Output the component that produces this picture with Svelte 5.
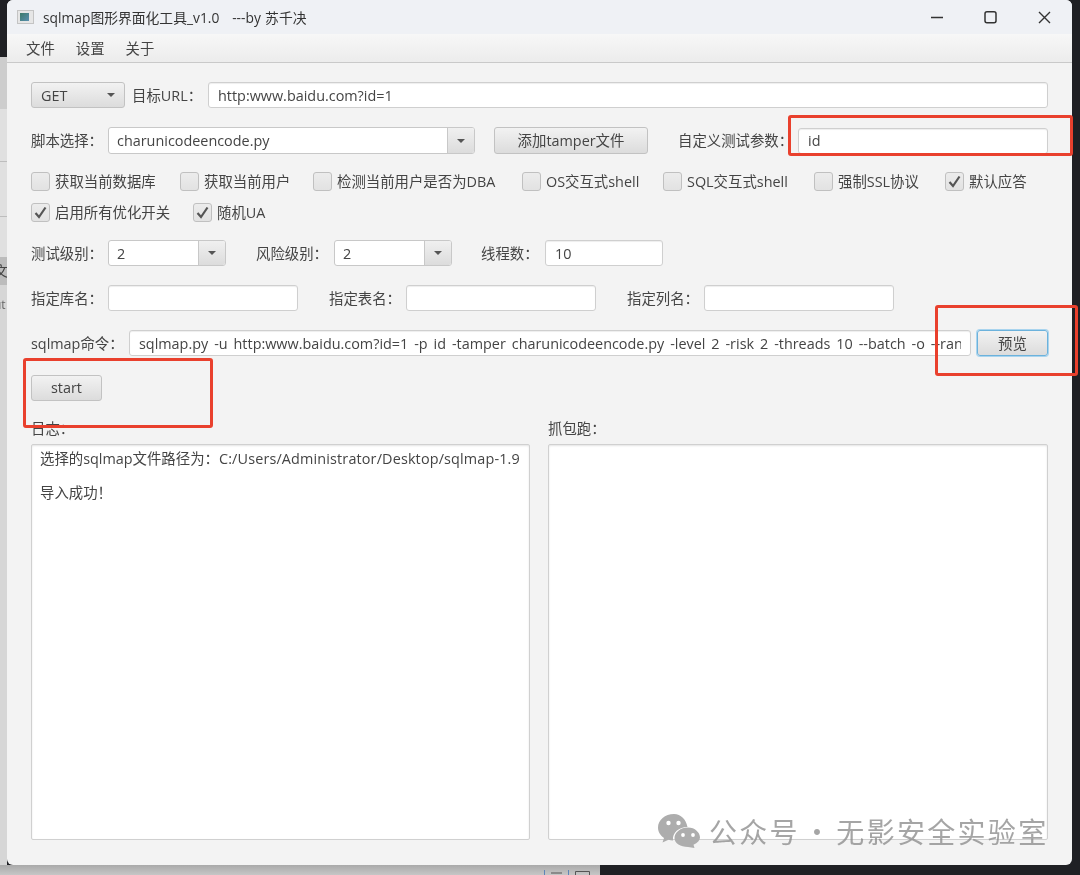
<script>
  const checksOne = [
    { text: '获取当前数据库', width: 149 },
    { text: '获取当前用户', width: 133 },
    { text: '检测当前用户是否为DBA', width: 209 },
    { text: 'OS交互式shell', width: 141 },
    { text: 'SQL交互式shell', width: 151 },
    { text: '强制SSL协议', width: 131 },
    { text: '默认应答', width: 90, on: true }
  ];
  const checksTwo = [
    { text: '启用所有优化开关', width: 162, on: true },
    { text: '随机UA', width: 90, on: true }
  ];
  const command = 'sqlmap.py -u http:www.baidu.com?id=1 -p id -tamper charunicodeencode.py -level 2 -risk 2 -threads 10 --batch -o --random-agent';
</script>

{#snippet check(item)}
  <label class="check" style={`width: ${item.width}px`}>
    <span class="check__box">
      {#if item.on}
        <svg width="15" height="15" viewBox="0 0 15 15"><path d="M2.500 8 L6 12 L12.500 2.500" fill="none" stroke="#555" stroke-width="2.200"/></svg>
      {/if}
    </span>
    <span class="check__text">{item.text}</span>
  </label>
{/snippet}

{#snippet arrow()}
  <span class="arrow"></span>
{/snippet}

<div class="desktop">
  <div class="strip">
    <div class="strip__dark"></div>
    <div class="strip__row strip__row--first"></div>
    <div class="strip__row"></div>
    <div class="strip__row strip__row--short"></div>
    <div class="strip__active">文</div>
    <div class="strip__tail">ut</div>
  </div>

  <div class="window">
    <header class="titlebar">
      <div class="titlebar__icon"><span></span></div>
      <div class="titlebar__text">sqlmap图形界面化工具_v1.0   ---by 苏千决</div>
      <svg class="winbtn" width="122" height="20" viewBox="0 0 122 20">
        <path d="M0 10.500 H12" stroke="#333" stroke-width="1.400"/>
        <rect x="54" y="4.700" width="11" height="11" rx="2" fill="none" stroke="#333" stroke-width="1.500"/>
        <path d="M108 5 L119 16 M119 5 L108 16" stroke="#333" stroke-width="1.400"/>
      </svg>
    </header>

    <nav class="menubar">
      <span>文件</span>
      <span>设置</span>
      <span>关于</span>
    </nav>

    <main class="content">
      <div class="row row--one">
        <div class="btn select">GET{@render arrow()}</div>
        <span class="label label--url">目标URL：</span>
        <input class="field field--grow" readonly value="http:www.baidu.com?id=1" />
      </div>

      <div class="row row--two">
        <span class="label label--s">脚本选择：</span>
        <div class="combo combo--wide">
          <span class="combo__value">charunicodeencode.py</span>
          <span class="combo__btn">{@render arrow()}</span>
        </div>
        <div class="btn btn--tamper">添加tamper文件</div>
        <span class="label label--param">自定义测试参数：</span>
        <input class="field field--grow" readonly value="id" />
      </div>

      <div class="checks checks--one">
        {#each checksOne as item}{@render check(item)}{/each}
      </div>
      <div class="checks checks--two">
        {#each checksTwo as item}{@render check(item)}{/each}
      </div>

      <div class="row row--three">
        <span class="label label--s">测试级别：</span>
        <div class="combo combo--num">
          <span class="combo__value">2</span>
          <span class="combo__btn">{@render arrow()}</span>
        </div>
        <span class="label label--risk">风险级别：</span>
        <div class="combo combo--num">
          <span class="combo__value">2</span>
          <span class="combo__btn">{@render arrow()}</span>
        </div>
        <span class="label label--threads">线程数：</span>
        <input class="field field--num" readonly value="10" />
      </div>

      <div class="row row--four">
        <span class="label label--s">指定库名：</span>
        <input class="field field--name" readonly />
        <span class="label label--name">指定表名：</span>
        <input class="field field--name" readonly />
        <span class="label label--name">指定列名：</span>
        <input class="field field--name" readonly />
      </div>

      <div class="row row--five">
        <span class="label label--cmd">sqlmap命令：</span>
        <input class="field field--grow field--cmd" readonly value={command} />
        <div class="btn btn--focus">预览</div>
      </div>

      <div class="btn btn--start">start</div>

      <div class="panes">
        <section class="pane">
          <div class="pane__title">日志：</div>
          <div class="area">
            <div>选择的sqlmap文件路径为：<span class="path">C:/Users/Administrator/Desktop/sqlmap-1.9</span></div>
            <div class="area__gap">导入成功！</div>
          </div>
        </section>
        <section class="pane">
          <div class="pane__title">抓包跑：</div>
          <div class="area"></div>
        </section>
      </div>
    </main>
  </div>

  <div class="bottom">
    <div class="bottom__icon">
      <svg width="56" height="10" viewBox="0 0 56 10">
        <path d="M0.500 0 V10 M24.500 0 V10" stroke="#5f84b8" stroke-width="1"/>
        <path d="M7 3 H18 M7 7 H18" stroke="#555" stroke-width="1.200"/>
        <path d="M31.500 10 V1.500 H45.500 V10" fill="none" stroke="#555" stroke-width="1"/>
      </svg>
    </div>
    <div class="bottom__dark"></div>
  </div>

  <div class="mark mark--param"></div>
  <div class="mark mark--preview"></div>
  <div class="mark mark--start"></div>

  <div class="watermark">
    <svg width="42" height="34" viewBox="0 0 42 34">
      <path d="M16 0 C7 0 0 6 0 13.500 C0 18 2.500 21.500 6 24 L4.500 28.500 L10.500 25.800 C12 26.200 13.500 26.500 15 26.500 C14.200 18.500 21 13 29.500 13 C28 5.500 23 0 16 0 Z" fill="#adadad"/>
      <path d="M30 13.500 C22.500 13.500 16.500 18.500 16.500 24 C16.500 29.500 22.500 33 30 33 L36.500 34 L35.500 30.800 C39.500 28.800 42 26.500 42 23.500 C42 18.500 37 13.500 30 13.500 Z" fill="#adadad"/>
      <circle cx="10.500" cy="9" r="2.200" fill="#fff"/>
      <circle cx="20.500" cy="9" r="2.200" fill="#fff"/>
      <circle cx="25" cy="21" r="1.900" fill="#fff"/>
      <circle cx="35" cy="21" r="1.900" fill="#fff"/>
    </svg>
    <span>公众号 · 无影安全实验室</span>
  </div>
</div>

<style>
  :global(body) {
    margin: 0;
    background: #1f2024;
  }

  .desktop {
    position: relative;
    width: 1080px;
    height: 875px;
    overflow: hidden;
    background: #1f2024;
    font-family: "Open Sans", "Noto Sans CJK SC", sans-serif;
    font-size: 14.4px;
    color: #444;
    filter: blur(0.4px);
  }

  .strip {
    position: absolute;
    left: 0;
    top: 0;
    width: 7px;
    height: 875px;
    background: #d6d6d6;
    overflow: hidden;
  }

  .strip__dark {
    height: 57px;
    background: #1f2024;
  }

  .strip__row {
    box-sizing: border-box;
    height: 55px;
    border-bottom: 1px solid #bdbdbd;
    background: #e0e0e0;
  }

  .strip__row--first {
    height: 105px;
    background: linear-gradient(#cdcdcd 50%, #e0e0e0 50%);
  }

  .strip__row--short {
    height: 40px;
    border-bottom: 0;
  }

  .strip__active {
    height: 28px;
    background: #bcbcbc;
    font-size: 14px;
    line-height: 28px;
    text-indent: -6px;
  }

  .strip__tail {
    margin-top: 11px;
    font-size: 12px;
    line-height: 18px;
    text-indent: -6px;
    color: #666;
  }

  .window {
    position: absolute;
    left: 7px;
    top: 0;
    width: 1065px;
    height: 865px;
    display: flex;
    flex-direction: column;
    border-radius: 6px;
    overflow: hidden;
    background: #f3f3f3;
  }

  .titlebar {
    height: 34px;
    flex: none;
    display: flex;
    align-items: center;
    background: #eff1f5;
  }

  .titlebar__icon {
    width: 17px;
    height: 14px;
    margin-left: 10px;
    background: #e6e6e6;
    border: 1px solid #c4c4c4;
    box-sizing: border-box;
  }

  .titlebar__icon span {
    display: block;
    width: 9px;
    height: 8px;
    margin: 2px 0 0 2px;
    background: linear-gradient(135deg, #3c7a6a, #5a8fb0);
  }

  .titlebar__text {
    margin-left: 9px;
    font-size: 13.8px;
    word-spacing: 0.7px;
    white-space: pre;
    color: #333;
    flex: 1;
  }

  .winbtn {
    flex: none;
    margin-right: 19px;
  }

  .menubar {
    height: 29px;
    flex: none;
    box-sizing: border-box;
    display: flex;
    align-items: center;
    gap: 21px;
    padding: 0 0 1px 19px;
    background: linear-gradient(#f7f7f7, #ececec);
    border-bottom: 1px solid #c9c9c9;
  }

  .content {
    flex: 1;
    display: flex;
    flex-direction: column;
    padding: 19px 24px 25px;
  }

  .row {
    display: flex;
    align-items: center;
    height: 26px;
  }

  .row--two {
    margin-top: 19px;
    height: 27px;
  }

  .row--three {
    margin-top: 18px;
  }

  .row--four {
    margin-top: 19px;
  }

  .row--five {
    margin-top: 19px;
  }

  .label {
    flex: none;
    white-space: nowrap;
    padding-bottom: 2px;
  }

  .label--url {
    width: 76px;
    margin-left: 7px;
  }

  .label--s {
    width: 77px;
  }

  .label--param {
    width: 120px;
    margin-left: 30px;
  }

  .label--risk {
    width: 78px;
    margin-left: 30px;
  }

  .label--threads {
    width: 64px;
    margin-left: 29px;
  }

  .label--name {
    width: 77px;
    margin-left: 31px;
  }

  .label--cmd {
    width: 98px;
  }

  .field {
    box-sizing: border-box;
    height: 26px;
    padding: 0 9px;
    border: 1px solid #cfcfcf;
    border-radius: 3px;
    background: #fff;
    box-shadow: inset 0 1px 1px #eee;
    font: inherit;
    color: #444;
    outline: none;
    min-width: 0;
  }

  .field--grow {
    flex: 1;
  }

  .field--cmd {
    word-spacing: 2.2px;
  }

  .field--num {
    width: 118px;
  }

  .field--name {
    width: 190px;
  }

  .btn {
    flex: none;
    box-sizing: border-box;
    height: 26px;
    display: flex;
    align-items: center;
    justify-content: center;
    padding-bottom: 2px;
    border: 1px solid #c2c2c2;
    border-radius: 3px;
    background: linear-gradient(#f2f2f2, #dcdcdc);
  }

  .select {
    width: 94px;
    justify-content: space-between;
    padding: 0 9px;
  }

  .btn--tamper {
    width: 154px;
    height: 27px;
    margin-left: 19px;
  }

  .btn--focus {
    width: 71px;
    margin-left: 6px;
    border-color: #6cb2dc;
    box-shadow: 0 0 0 1px #a9d4ee;
  }

  .btn--start {
    width: 71px;
    margin-top: 19px;
  }

  .arrow {
    width: 0;
    height: 0;
    border-left: 4px solid transparent;
    border-right: 4px solid transparent;
    border-top: 4px solid #555;
  }

  .combo {
    flex: none;
    box-sizing: border-box;
    height: 100%;
    display: flex;
    align-items: stretch;
    border: 1px solid #c8c8c8;
    border-radius: 3px;
    background: #fff;
    overflow: hidden;
  }

  .combo--wide {
    width: 367px;
  }

  .combo--num {
    width: 118px;
  }

  .combo__value {
    flex: 1;
    padding-left: 8px;
    display: flex;
    align-items: center;
  }

  .combo__btn {
    width: 26px;
    display: flex;
    align-items: center;
    justify-content: center;
    border-left: 1px solid #c8c8c8;
    background: linear-gradient(#f0f0f0, #dcdcdc);
  }

  .checks {
    display: flex;
    align-items: center;
    height: 19px;
  }

  .checks--one {
    margin-top: 18px;
  }

  .checks--two {
    margin-top: 12px;
  }

  .check {
    flex: none;
    display: flex;
    align-items: center;
    gap: 5px;
    white-space: nowrap;
  }

  .check__text {
    padding-bottom: 2px;
  }

  .check__box {
    flex: none;
    box-sizing: border-box;
    width: 19px;
    height: 19px;
    display: flex;
    align-items: center;
    justify-content: center;
    border: 1px solid #c0c0c0;
    border-radius: 3px;
    background: linear-gradient(#ececec, #e2e2e2);
  }

  .panes {
    flex: 1;
    display: flex;
    gap: 18px;
    margin-top: 19px;
    min-height: 0;
  }

  .pane {
    flex: 1;
    display: flex;
    flex-direction: column;
    min-width: 0;
  }

  .pane:first-child {
    flex: none;
    width: 499px;
  }

  .pane__title {
    height: 24px;
    line-height: 18px;
    flex: none;
  }

  .area {
    flex: 1;
    box-sizing: border-box;
    padding: 4px 8px;
    border: 1px solid #d0d0d0;
    border-radius: 2px;
    background: #fff;
    box-shadow: inset 0 1px 2px #e4e4e4;
    line-height: 20px;
    white-space: nowrap;
    overflow: hidden;
  }

  .path {
    letter-spacing: 0.15px;
  }

  .area__gap {
    margin-top: 14px;
  }

  .bottom {
    position: absolute;
    left: 0;
    top: 865px;
    width: 1080px;
    height: 10px;
    display: flex;
    background: linear-gradient(#a9a9a9, #c6c6c6);
  }

  .bottom__icon {
    margin-left: 544px;
    width: 56px;
    height: 10px;
  }

  .bottom__dark {
    flex: 1;
    background: #1f2024;
  }

  .mark {
    position: absolute;
    box-sizing: border-box;
    border: 3px solid #e9402d;
    border-radius: 3px;
  }

  .mark--param {
    left: 788px;
    top: 115px;
    width: 285px;
    height: 41px;
  }

  .mark--preview {
    left: 935px;
    top: 305px;
    width: 143px;
    height: 71px;
  }

  .mark--start {
    left: 23px;
    top: 358px;
    width: 190px;
    height: 70px;
  }

  .watermark {
    position: absolute;
    left: 658px;
    top: 813px;
    display: flex;
    align-items: center;
    gap: 9px;
    font-family: "Noto Sans CJK SC", sans-serif;
    font-size: 28px;
    letter-spacing: 2.3px;
    word-spacing: -5.5px;
    color: rgba(140, 140, 140, 0.78);
    white-space: nowrap;
    height: 36px;
  }
</style>
